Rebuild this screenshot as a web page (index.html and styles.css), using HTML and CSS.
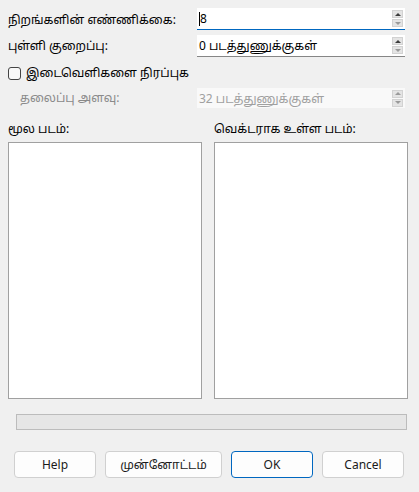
FILE: index.html
```html
<!DOCTYPE html>
<html lang="ta">
<head>
<meta charset="utf-8">
<title>Vectorize</title>
<link rel="stylesheet" href="styles.css">
</head>
<body>
<div class="dialog">
  <div class="form">
    <div class="row">
      <span class="label first">நிறங்களின் எண்ணிக்கை:</span>
      <div class="spin focused">
        <span class="value"><span class="caret"></span>8</span>
        <div class="spin-btns">
          <span class="sb up"><i class="tri-up"></i></span>
          <span class="sb down"><i class="tri-down light"></i></span>
        </div>
      </div>
    </div>
    <div class="row">
      <span class="label">புள்ளி குறைப்பு:</span>
      <div class="spin">
        <span class="value">0 படத்துணுக்குகள்</span>
        <div class="spin-btns">
          <span class="sb up"><i class="tri-up"></i></span>
          <span class="sb down"><i class="tri-down light"></i></span>
        </div>
      </div>
    </div>
    <label class="check-row">
      <span class="checkbox"></span>
      <span class="label">இடைவெளிகளை நிரப்புக</span>
    </label>
    <div class="row disabled">
      <span class="label indent">தலைப்பு அளவு:</span>
      <div class="spin off">
        <span class="value">32 படத்துணுக்குகள்</span>
        <div class="spin-btns">
          <span class="sb up"><i class="tri-up light"></i></span>
          <span class="sb down"><i class="tri-down light"></i></span>
        </div>
      </div>
    </div>
  </div>

  <div class="previews">
    <div class="pane">
      <span class="label">மூல படம்:</span>
      <div class="canvas"></div>
    </div>
    <div class="pane">
      <span class="label">வெக்டராக உள்ள படம்:</span>
      <div class="canvas"></div>
    </div>
  </div>

  <div class="progress"></div>

  <div class="buttons">
    <button class="btn">Help</button>
    <button class="btn wide">முன்னோட்டம்</button>
    <button class="btn default">OK</button>
    <button class="btn">Cancel</button>
  </div>
</div>
</body>
</html>
```

FILE: styles.css
```css
* { box-sizing: border-box; }
html, body {
  margin: 0;
  padding: 0;
  background: #f0f0f0;
}
body {
  font-family: "Noto Sans", "Noto Sans Tamil", "Lohit Tamil", sans-serif;
  font-size: 12px;
  color: #000;
  width: 419px;
  height: 492px;
  overflow: hidden;
}
.dialog {
  padding: 8px 11px 0 8px;
  display: flex;
  flex-direction: column;
}
.form {
  display: flex;
  flex-direction: column;
}
.row {
  display: grid;
  grid-template-columns: 189px 208px;
  align-items: center;
  height: 22px;
  margin-bottom: 5px;
}
.label {
  white-space: nowrap;
  line-height: 16px;
}
.label.first { padding-top: 2px; }
.indent {
  padding-left: 12px;
}
.disabled .label { color: #8a8a8a; }

.spin {
  height: 22px;
  background: #fff;
  border-bottom: 1px solid #868686;
  display: flex;
  align-items: center;
  justify-content: space-between;
  padding-left: 2px;
}
.spin.focused { border-bottom-color: #0067c0; }
.spin.off {
  background: #f9f9f9;
  border-bottom: none;
  height: 20px;
  color: #a0a0a0;
}
.value {
  display: flex;
  align-items: center;
  white-space: nowrap;
}
.caret {
  display: inline-block;
  width: 1px;
  height: 14px;
  background: #000;
}
.spin-btns {
  display: flex;
  flex-direction: column;
  gap: 1px;
  margin-right: 2px;
}
.sb {
  width: 11px;
  height: 8px;
  background: #e4e4e4;
  border: 1px solid #d2d2d2;
  display: flex;
  align-items: center;
  justify-content: center;
}
.tri-up, .tri-down {
  width: 0;
  height: 0;
  border-left: 3px solid transparent;
  border-right: 3px solid transparent;
}
.tri-up { border-bottom: 3px solid #3c3c3c; }
.tri-down { border-top: 3px solid #3c3c3c; }
.tri-up.light { border-bottom-color: #9a9a9a; }
.tri-down.light { border-top-color: #9a9a9a; }

.check-row {
  display: flex;
  align-items: center;
  gap: 5px;
  height: 16px;
  margin: 3px 0 7px;
}
.checkbox {
  width: 13px;
  height: 13px;
  border: 1px solid #444;
  border-radius: 3px;
  background: #f8f8f8;
}
.row.disabled { height: 20px; margin-bottom: 0; }

.previews {
  display: grid;
  grid-template-columns: 194px 194px;
  column-gap: 12px;
  margin-top: 13px;
}
.pane {
  display: flex;
  flex-direction: column;
  gap: 5px;
}
.canvas {
  height: 257px;
  background: #fff;
  border: 1px solid #a0a0a0;
}

.progress {
  margin: 15px 1px 0 8px;
  height: 16px;
  background: #e6e6e6;
  border: 1px solid #bcbcbc;
}

.buttons {
  display: flex;
  gap: 9px;
  margin: 21px 0 0 6px;
}
.btn {
  font-family: "Noto Sans", "Noto Sans Tamil", sans-serif;
  font-size: 12px;
  height: 27px;
  width: 82px;
  background: #fdfdfd;
  border: 1px solid #d0d0d0;
  border-radius: 4px;
  color: #1a1a1a;
  padding: 0;
}
.btn.wide { width: 117px; }
.btn.default { border-color: #0067c0; }
```
